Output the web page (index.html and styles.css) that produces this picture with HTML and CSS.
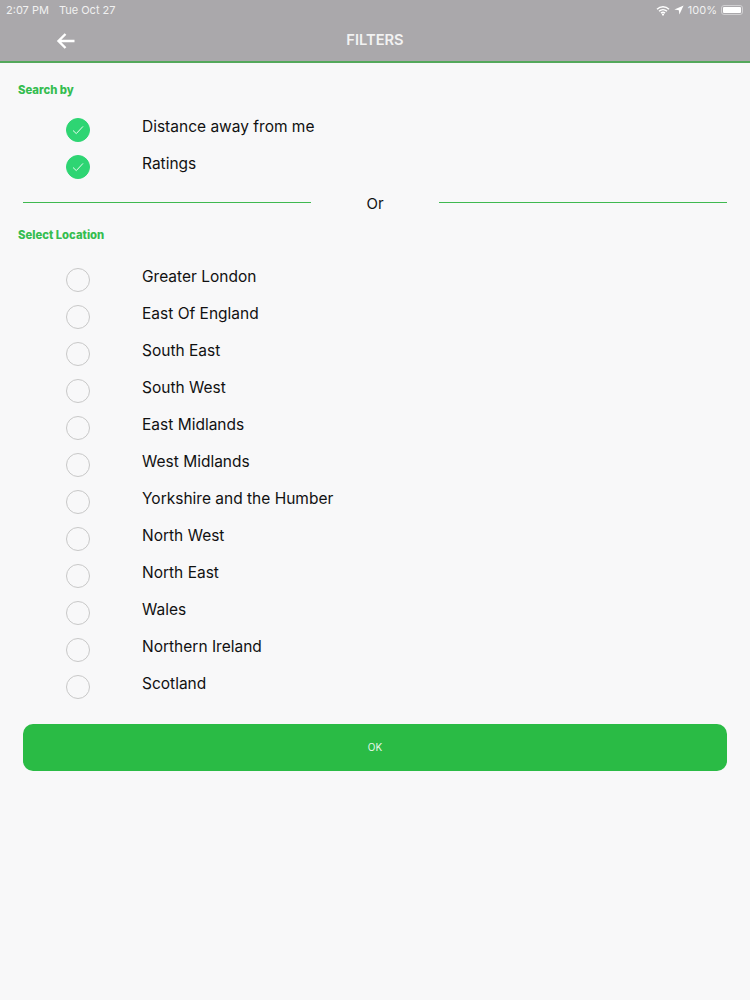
FILE: index.html
```html
<!DOCTYPE html>
<html lang="en">

<head>
    <meta charset="UTF-8">
    <meta name="viewport" content="width=device-width, initial-scale=1.0">
    <title>Filters</title>
    <link rel="stylesheet" href="styles.css">
</head>

<body>
    <div class="header">
        <div class="status">
            <div class="status-left"><span>2:07 PM</span><span>Tue Oct 27</span></div>
            <div class="status-right">
                <svg class="wifi" width="14" height="11" viewBox="0 0 14 11">
                    <path d="M1 4.2C4.4 1 9.6 1 13 4.2" />
                    <path d="M3 6.2C5.3 4.2 8.7 4.2 11 6.2" />
                    <path d="M5 8.1C6.2 7.1 7.8 7.1 9 8.1" />
                    <circle cx="7" cy="9.6" r="1.1" />
                </svg>
                <svg class="arrow" width="10" height="10" viewBox="0 0 10 10">
                    <path d="M9.6 0.4L0.4 4.6L4.8 5.2L5.4 9.6Z" />
                </svg>
                <span>100%</span>
                <div class="battery"><div class="battery-fill"></div></div>
            </div>
        </div>
        <div class="title-bar">
            <svg class="back" width="20" height="18" viewBox="0 0 20 18">
                <path d="M18.5 9H2.5M9.5 2L2.5 9L9.5 16" />
            </svg>
            <div class="title">FILTERS</div>
        </div>
    </div>

    <div class="content">
        <div class="label">Search by</div>
        <ul class="list list-top">
            <li><span class="circle checked"><svg width="14" height="12" viewBox="0 0 14 12"><path d="M2 6.5L5.3 9.6L12 2.4" /></svg></span><span class="name">Distance away from me</span></li>
            <li><span class="circle checked"><svg width="14" height="12" viewBox="0 0 14 12"><path d="M2 6.5L5.3 9.6L12 2.4" /></svg></span><span class="name">Ratings</span></li>
        </ul>

        <div class="or"><i></i><span>Or</span><i></i></div>

        <div class="label">Select Location</div>
        <ul class="list list-location">
            <li><span class="circle"></span><span class="name">Greater London</span></li>
            <li><span class="circle"></span><span class="name">East Of England</span></li>
            <li><span class="circle"></span><span class="name">South East</span></li>
            <li><span class="circle"></span><span class="name">South West</span></li>
            <li><span class="circle"></span><span class="name">East Midlands</span></li>
            <li><span class="circle"></span><span class="name">West Midlands</span></li>
            <li><span class="circle"></span><span class="name">Yorkshire and the Humber</span></li>
            <li><span class="circle"></span><span class="name">North West</span></li>
            <li><span class="circle"></span><span class="name">North East</span></li>
            <li><span class="circle"></span><span class="name">Wales</span></li>
            <li><span class="circle"></span><span class="name">Northern Ireland</span></li>
            <li><span class="circle"></span><span class="name">Scotland</span></li>
        </ul>

        <button class="ok">OK</button>
    </div>
</body>

</html>
```

FILE: styles.css
```css
* {
    padding: 0;
    margin: 0;
    list-style: none;
    box-sizing: border-box;
}

html,
body {
    height: 1000px;
    overflow: hidden;
}

body {
    background: #f8f8f9;
    font-family: "Inter", "Liberation Sans", sans-serif;
    color: #111;
}

.header {
    height: 63px;
    background: #aaa8ab;
    border-bottom: 2px solid #54a85c;
    color: #fff;
}

.status {
    height: 20px;
    padding: 0 7px 0 6px;
    display: flex;
    justify-content: space-between;
    align-items: center;
    font-size: 11px;
    color: #f1f1f1;
}

.status-left {
    display: flex;
    gap: 10px;
}

.status-right {
    display: flex;
    align-items: center;
    gap: 4px;
}

.wifi path {
    fill: none;
    stroke: #fff;
    stroke-width: 1.5;
}

.wifi circle,
.arrow path {
    fill: #fff;
}

.battery {
    width: 22px;
    height: 10px;
    padding: 1px;
    border: 1px solid #d0cfd1;
    border-radius: 3px;
}

.battery-fill {
    height: 100%;
    background: #fff;
    border-radius: 1px;
}

.title-bar {
    height: 39px;
    display: flex;
    align-items: center;
    justify-content: center;
    position: relative;
}

.back {
    position: absolute;
    left: 56px;
    top: 12px;
}

.back path {
    fill: none;
    stroke: #fff;
    stroke-width: 2.4;
}

.title {
    font-size: 14.7px;
    font-weight: 600;
    color: #f2f2f2;
}

.content {
    padding: 20px 23px 0 18px;
}

.label {
    font-size: 11.3px;
    line-height: 14px;
    font-weight: 800;
    color: #35bd50;
}

.list li {
    height: 37px;
    display: flex;
    padding-left: 48px;
}

.list-top {
    margin-top: 14px;
}

.circle {
    width: 24px;
    height: 24px;
    margin-top: 7px;
    border: 1px solid #c8c8c8;
    border-radius: 50%;
    display: flex;
    align-items: center;
    justify-content: center;
}

.circle.checked {
    background: #2ed573;
    border-color: #2ed573;
}

.circle svg path {
    fill: none;
    stroke: #e8fbef;
    stroke-width: 1;
}

.name {
    margin-left: 52px;
    font-size: 15.5px;
    line-height: 24px;
    margin-top: 4px;
}

.or {
    margin: 5px 0 0 5px;
    height: 24px;
    display: flex;
    align-items: center;
    font-size: 15px;
}

.or i {
    flex: 1;
    height: 1px;
    background: #3fb950;
}

.or span {
    width: 128px;
    padding-top: 2px;
    text-align: center;
}

.or + .label {
    margin-top: 14px;
}

.list-location {
    margin-top: 19px;
}

.ok {
    display: block;
    width: calc(100% - 5px);
    margin: 19px 0 0 5px;
    height: 47px;
    padding-bottom: 2px;
    background: #2abb45;
    border: 0;
    border-radius: 10px;
    color: #e6f7e9;
    font-family: inherit;
    font-size: 10px;
}
```
